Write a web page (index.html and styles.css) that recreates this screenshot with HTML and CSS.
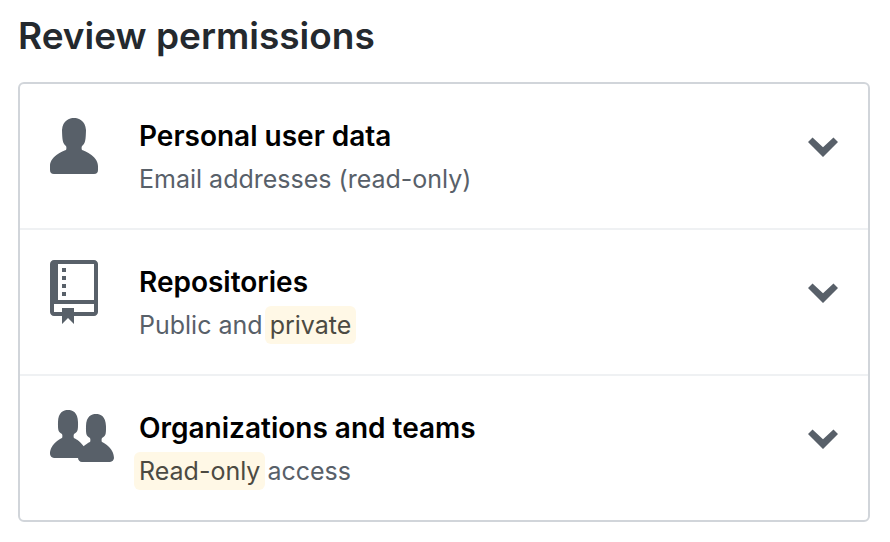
FILE: index.html
```html
<!DOCTYPE html>
<html lang="en">
<head>
<meta charset="utf-8">
<meta name="viewport" content="width=device-width, initial-scale=1">
<title>Review permissions</title>
<link rel="stylesheet" href="styles.css">
</head>
<body>
<main class="page">
  <h1 class="heading">Review permissions</h1>
  <ul class="permissions">
    <li class="permission">
      <span class="permission-icon"><svg width="48" height="64" viewBox="0 0 12 16" aria-hidden="true"><path d="M12 14.002a.998.998 0 01-.998.998H1.001A1 1 0 010 13.999V13c0-2.633 4-4 4-4s.229-.409 0-1c-.841-.62-.944-1.59-1-4 .173-2.413 1.867-3 3-3s2.827.586 3 3c-.056 2.41-.159 3.38-1 4-.229.59 0 1 0 1s4 1.367 4 4v1.002z"/></svg></span>
      <div class="permission-text">
        <h2 class="title">Personal user data</h2>
        <p class="detail">Email addresses (read-only)</p>
      </div>
      <button class="toggle" type="button" aria-label="Show personal user data details"><svg width="30" height="48" viewBox="0 0 10 16" aria-hidden="true"><path d="M5 11L0 6l1.5-1.5L5 7.75 8.5 4.5 10 6l-5 5z"/></svg></button>
    </li>
    <li class="permission">
      <span class="permission-icon"><svg width="48" height="64" viewBox="0 0 12 16" aria-hidden="true"><path d="M4 9H3V8h1v1zm0-3H3v1h1V6zm0-2H3v1h1V4zm0-2H3v1h1V2zm8-1v12c0 .55-.45 1-1 1H6v2l-1.500-1.500L3 16v-2H1c-.55 0-1-.45-1-1V1c0-.55.45-1 1-1h10c.55 0 1 .45 1 1zm-1 10H1v2h2v-1h3v1h5v-2zm0-10H2v9h9V1z"/></svg></span>
      <div class="permission-text">
        <h2 class="title">Repositories</h2>
        <p class="detail">Public and <mark class="highlight">private</mark></p>
      </div>
      <button class="toggle" type="button" aria-label="Show repositories details"><svg width="30" height="48" viewBox="0 0 10 16" aria-hidden="true"><path d="M5 11L0 6l1.5-1.5L5 7.75 8.5 4.5 10 6l-5 5z"/></svg></button>
    </li>
    <li class="permission">
      <span class="permission-icon"><svg width="64" height="64" viewBox="0 0 16 16" aria-hidden="true"><path d="M16 12.999c0 .439-.45 1-1 1H7.995c-.539 0-.994-.447-.995-.999H1c-.54 0-1-.561-1-1 0-2.634 3-4 3-4s.229-.409 0-1c-.841-.621-1.058-.59-1-3 .058-2.419 1.367-3 2.5-3s2.442.58 2.5 3c.058 2.41-.159 2.379-1 3-.229.59 0 1 0 1s1.549.711 2.42 2.088C9.196 9.369 10 8.999 10 8.999s.229-.409 0-1c-.841-.62-1.058-.59-1-3 .058-2.419 1.367-3 2.5-3s2.437.581 2.495 3c.059 2.41-.158 2.38-1 3-.229.59 0 1 0 1s3.005 1.366 3.005 4z"/></svg></span>
      <div class="permission-text">
        <h2 class="title">Organizations and teams</h2>
        <p class="detail"><mark class="highlight">Read-only</mark> access</p>
      </div>
      <button class="toggle" type="button" aria-label="Show organizations and teams details"><svg width="30" height="48" viewBox="0 0 10 16" aria-hidden="true"><path d="M5 11L0 6l1.5-1.5L5 7.75 8.5 4.5 10 6l-5 5z"/></svg></button>
    </li>
  </ul>
</main>
</body>
</html>
```
FILE: styles.css
```css
* {
  box-sizing: border-box;
}

body {
  margin: 0;
  background: #fff;
  color: #24292e;
  font-family: Inter, "Liberation Sans", sans-serif;
}

.page {
  padding: 12px 20px 20px 18px;
}

.heading {
  margin: 0 0 22px;
  font-size: 37px;
  line-height: 48px;
  font-weight: 600;
}

.permissions {
  margin: 0;
  padding: 0;
  list-style: none;
  border: 2px solid #d1d5da;
  border-radius: 6px;
}

.permission {
  display: flex;
  align-items: flex-start;
  padding: 30px 30px 28px;
}

.permission + .permission {
  border-top: 2px solid #eff1f3;
}

.permission-icon {
  flex: 0 0 89px;
}

svg {
  display: block;
  fill: #586069;
}

.permission-text {
  flex: 1;
  min-width: 0;
}

.title {
  margin: 0;
  color: #000;
  font-size: 28px;
  line-height: 44px;
  font-weight: 600;
}

.detail {
  margin: 0;
  color: #586069;
  font-size: 25px;
  line-height: 42px;
}

.highlight {
  margin: 0 -5px;
  padding: 4px 5px;
  border-radius: 6px;
  background: #fff8e6;
  color: #4c4a42;
}

.toggle {
  margin: 10px 0 0;
  padding: 0;
  border: 0;
  background: none;
  cursor: pointer;
}
```
